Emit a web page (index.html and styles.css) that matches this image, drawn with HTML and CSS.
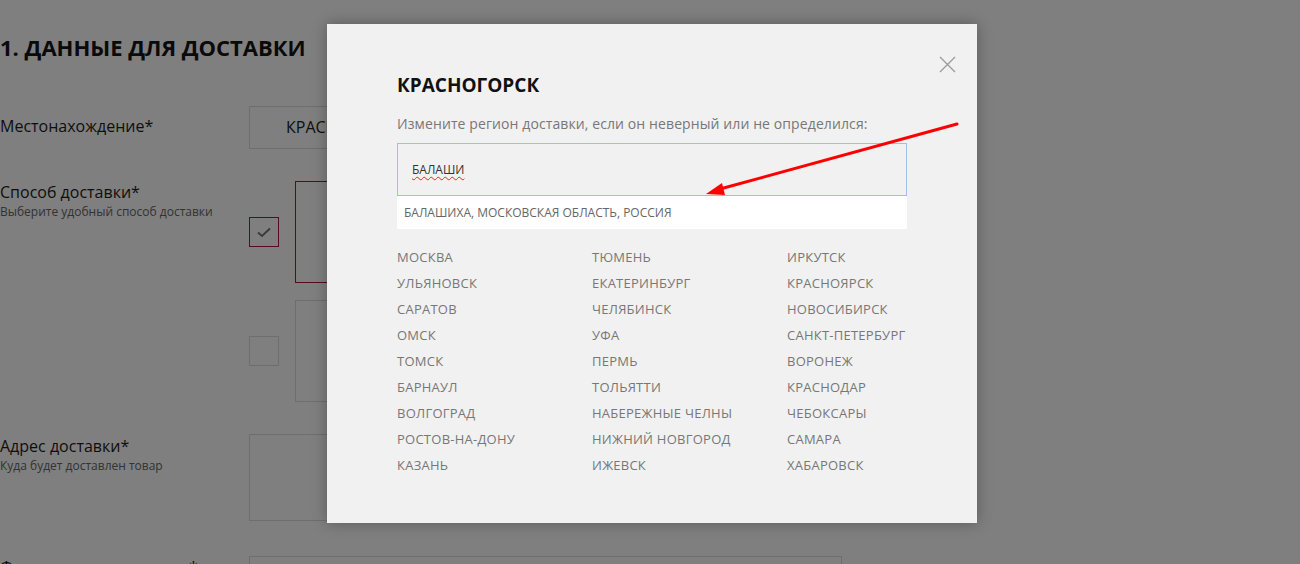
FILE: index.html
```html
<!DOCTYPE html>
<html lang="ru">
<head>
<meta charset="utf-8">
<title>Данные для доставки</title>
<link rel="stylesheet" href="styles.css">
</head>
<body>
<div class="page">
  <h1 class="title">1. ДАННЫЕ ДЛЯ ДОСТАВКИ</h1>

  <div class="row row-loc">
    <div class="label"><div class="label-main">Местонахождение*</div></div>
    <div class="field loc-field">КРАСНОГОРСК</div>
  </div>

  <div class="row row-ship">
    <div class="label">
      <div class="label-main">Способ доставки*</div>
      <div class="label-sub">Выберите удобный способ доставки</div>
    </div>
    <div class="options">
      <div class="option">
        <div class="check checked">
          <svg width="16" height="12" viewBox="0 0 16 12"><path d="M2 6.5 L6 10 L14 2.5" fill="none" stroke="#777" stroke-width="2"/></svg>
        </div>
        <div class="card card-active"></div>
      </div>
      <div class="option">
        <div class="check"></div>
        <div class="card"></div>
      </div>
    </div>
  </div>

  <div class="row row-addr">
    <div class="label">
      <div class="label-main">Адрес доставки*</div>
      <div class="label-sub">Куда будет доставлен товар</div>
    </div>
    <div class="field addr-field"></div>
  </div>

  <div class="row row-name">
    <div class="label"><div class="label-main">Фамилия, имя, отчество*</div></div>
    <div class="field name-field"></div>
  </div>
</div>

<div class="overlay">
  <div class="modal">
    <button class="close" aria-label="Закрыть">
      <svg width="17" height="17" viewBox="0 0 17 17"><path d="M1 1 L16 16 M16 1 L1 16" stroke="#9a9a9a" stroke-width="1.3" fill="none"/></svg>
    </button>
    <div class="modal-title">КРАСНОГОРСК</div>
    <div class="modal-sub">Измените регион доставки, если он неверный или не определился:</div>
    <div class="search">
      <div class="search-input"><span class="typed">БАЛАШИ</span></div>
      <div class="suggest">БАЛАШИХА, МОСКОВСКАЯ ОБЛАСТЬ, РОССИЯ</div>
    </div>
    <div class="cities">
      <div class="city">МОСКВА</div><div class="city">ТЮМЕНЬ</div><div class="city">ИРКУТСК</div>
      <div class="city">УЛЬЯНОВСК</div><div class="city">ЕКАТЕРИНБУРГ</div><div class="city">КРАСНОЯРСК</div>
      <div class="city">САРАТОВ</div><div class="city">ЧЕЛЯБИНСК</div><div class="city">НОВОСИБИРСК</div>
      <div class="city">ОМСК</div><div class="city">УФА</div><div class="city">САНКТ-ПЕТЕРБУРГ</div>
      <div class="city">ТОМСК</div><div class="city">ПЕРМЬ</div><div class="city">ВОРОНЕЖ</div>
      <div class="city">БАРНАУЛ</div><div class="city">ТОЛЬЯТТИ</div><div class="city">КРАСНОДАР</div>
      <div class="city">ВОЛГОГРАД</div><div class="city">НАБЕРЕЖНЫЕ ЧЕЛНЫ</div><div class="city">ЧЕБОКСАРЫ</div>
      <div class="city">РОСТОВ-НА-ДОНУ</div><div class="city">НИЖНИЙ НОВГОРОД</div><div class="city">САМАРА</div>
      <div class="city">КАЗАНЬ</div><div class="city">ИЖЕВСК</div><div class="city">ХАБАРОВСК</div>
    </div>
  </div>
</div>

<svg class="arrow" width="1300" height="564" viewBox="0 0 1300 564">
  <line x1="957" y1="124" x2="720" y2="189" stroke="#ff0000" stroke-width="3" stroke-linecap="round"/>
  <polygon points="706,194 722,183 725,195" fill="#ff0000"/>
</svg>
</body>
</html>
```

FILE: styles.css
```css
* { box-sizing: border-box; }
html, body { margin: 0; padding: 0; }
body {
  width: 1300px;
  height: 564px;
  overflow: hidden;
  background: #ffffff;
  font-family: "Open Sans", "Noto Sans", sans-serif;
  color: #222;
  position: relative;
}
.page {
  padding-top: 33px;
  height: 564px;
  overflow: hidden;
}
.title {
  margin: 0 0 45px 0;
  font-size: 22px;
  font-weight: 700;
  line-height: 28px;
  color: #141414;
  letter-spacing: 0;
}
.row {
  display: flex;
  align-items: flex-start;
}
.label {
  width: 249px;
  flex: none;
}
.label-main {
  font-size: 16px;
  line-height: 22px;
  color: #1c1c1c;
}
.label-sub {
  font-size: 12px;
  line-height: 14px;
  color: #666;
  margin-top: 2px;
}
.field {
  border: 1px solid #dcdcdc;
  background: #fff;
}
.loc-field {
  width: 592px;
  height: 43px;
  font-size: 16px;
  line-height: 41px;
  color: #222;
  padding-left: 36px;
}
.row-loc { align-items: center; }
.row-loc .label { margin-top: -4px; }
.row-ship { margin-top: 32px; }
.row-ship .label { padding-top: 0; }
.options {
  display: flex;
  flex-direction: column;
  gap: 17px;
}
.option {
  display: flex;
  align-items: center;
  gap: 16px;
}
.check {
  width: 30px;
  height: 30px;
  border: 1px solid #dcdcdc;
  display: flex;
  align-items: center;
  justify-content: center;
}
.check.checked { border-color: #b5153d; }
.card {
  width: 546px;
  height: 102px;
  border: 1px solid #dcdcdc;
}
.card-active { border-color: #b5153d; }
.row-addr { margin-top: 32px; }
.row-addr .label { padding-top: 1px; }
.addr-field {
  width: 592px;
  height: 87px;
}
.row-name { margin-top: 35px; }
.name-field {
  width: 593px;
  height: 40px;
}

.overlay {
  position: absolute;
  left: 0;
  top: 0;
  width: 1300px;
  height: 564px;
  background: rgba(0, 0, 0, 0.5);
  display: flex;
  justify-content: center;
  align-items: flex-start;
  padding-top: 24px;
  padding-left: 4px;
}
.modal {
  position: relative;
  width: 650px;
  height: 499px;
  background: #f1f1f1;
  box-shadow: 0 0 14px rgba(0, 0, 0, 0.3);
  padding: 49px 70px 0 70px;
}
.close {
  position: absolute;
  top: 32px;
  right: 21px;
  width: 17px;
  height: 17px;
  padding: 0;
  border: 0;
  background: transparent;
  display: block;
}
.close svg { display: block; }
.modal-title {
  font-size: 19px;
  font-weight: 700;
  line-height: 24px;
  color: #111;
}
.modal-sub {
  margin-top: 17px;
  font-size: 14px;
  line-height: 20px;
  color: #777;
  letter-spacing: 0.1px;
}
.search {
  margin-top: 9px;
  position: relative;
  height: 86px;
}
.search-input {
  height: 53px;
  border: 1px solid #9fbdf1;
  background: #f1f1f1;
  padding-left: 14px;
  font-size: 12px;
  line-height: 51px;
  color: #333;
}
.typed {
  text-decoration: underline wavy #e0251b;
  text-decoration-thickness: 1px;
  text-underline-offset: 2px;
}
.suggest {
  height: 33px;
  background: #fff;
  padding-left: 7px;
  font-size: 12px;
  line-height: 34px;
  color: #666;
}
.cities {
  margin-top: 18px;
  display: grid;
  grid-template-columns: 195px 195px 120px;
  grid-auto-rows: 26px;
}
.city {
  font-size: 13px;
  line-height: 20px;
  color: #777;
  white-space: nowrap;
  letter-spacing: 0.25px;
}
.arrow {
  position: absolute;
  left: 0;
  top: 0;
  pointer-events: none;
}
```
